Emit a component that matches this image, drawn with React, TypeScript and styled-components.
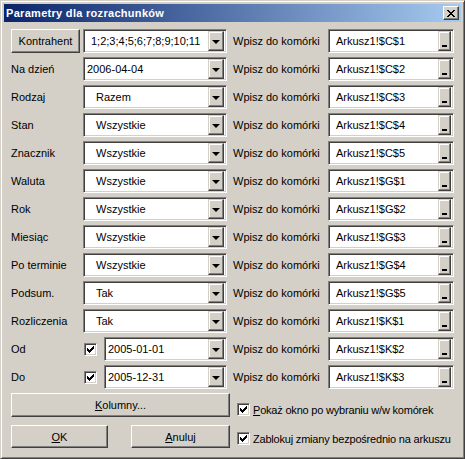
import React from "react";
import styled, { createGlobalStyle, css } from "styled-components";

const GlobalStyle = createGlobalStyle`
  html, body { margin: 0; padding: 0; background: #d4d0c8; }
  body { font-family: "Liberation Sans", Arial, sans-serif; font-size: 11px; color: #000; }
  * { box-sizing: border-box; }
`;

const raisedBtn = css`
  background: #d4d0c8;
  border: 1px solid;
  border-color: #fff #404040 #404040 #fff;
  box-shadow: inset -1px -1px #808080, inset 1px 1px #d4d0c8;
`;

const raisedSmall = css`
  background: #d4d0c8;
  border: 1px solid;
  border-color: #d4d0c8 #404040 #404040 #d4d0c8;
  box-shadow: inset -1px -1px #808080, inset 1px 1px #fff;
`;

const sunken = css`
  background: #fff;
  border: 1px solid;
  border-color: #808080 #fff #fff #808080;
  box-shadow: inset 1px 1px #404040, inset -1px -1px #d4d0c8;
`;

const Window = styled.div`
  width: 465px;
  height: 459px;
  background: #d4d0c8;
  border: 1px solid;
  border-color: #d4d0c8 #404040 #404040 #d4d0c8;
  box-shadow: inset 1px 1px #fff, inset -1px -1px #808080;
  padding: 3px;
  display: flex;
  flex-direction: column;
`;

const TitleBar = styled.div`
  height: 18px;
  flex: none;
  display: flex;
  align-items: center;
  justify-content: space-between;
  padding: 0 2px 0 2px;
  background: linear-gradient(to right, #0a246a, #a6caf0);
`;

const TitleText = styled.span`
  color: #fff;
  font-weight: bold;
  font-size: 11px;
  letter-spacing: 0.3px;
`;

const CloseButton = styled.div`
  ${raisedBtn};
  width: 16px;
  height: 14px;
  display: flex;
  align-items: center;
  justify-content: center;
`;

const Content = styled.div`
  padding: 7px 0 0 7px;
  display: flex;
  flex-direction: column;
  gap: 4px;
`;

const FormGrid = styled.div`
  display: grid;
  grid-template-columns: 72px 144px 101px 126px;
  grid-auto-rows: 24px;
  row-gap: 4px;
`;

const Label = styled.div`
  display: flex;
  align-items: center;
  white-space: nowrap;
`;

const CellLabel = styled(Label)`
  padding-left: 6px;
`;

const PushButton = styled.div<{ $w?: number; $h?: number }>`
  ${raisedBtn};
  width: ${(p) => (p.$w ? `${p.$w}px` : "100%")};
  height: ${(p) => (p.$h ? `${p.$h}px` : "100%")};
  display: flex;
  align-items: center;
  justify-content: center;
  white-space: nowrap;
`;

const Combo = styled.div`
  ${sunken};
  height: 24px;
  flex: 1;
  display: flex;
  align-items: center;
  padding: 2px;
  min-width: 0;
`;

const ComboText = styled.div<{ $indent: number }>`
  flex: 1;
  min-width: 0;
  overflow: hidden;
  white-space: nowrap;
  padding-left: ${(p) => p.$indent}px;
`;

const DropButton = styled.div`
  ${raisedSmall};
  width: 16px;
  height: 20px;
  flex: none;
  display: flex;
  align-items: center;
  justify-content: center;
`;

const RefButton = styled.div`
  ${raisedSmall};
  width: 13px;
  height: 20px;
  flex: none;
  display: flex;
  align-items: flex-end;
  justify-content: center;
  padding-bottom: 3px;
`;

const Dash = styled.div`
  width: 5px;
  height: 2px;
  background: #000;
`;

const Arrow = styled.div`
  width: 0;
  height: 0;
  border-left: 4px solid transparent;
  border-right: 4px solid transparent;
  border-top: 4px solid #000;
  margin-top: 1px;
`;

const CheckCell = styled.div`
  display: flex;
  align-items: center;
  gap: 7px;
  padding-left: 1px;
`;

const Box = styled.div`
  ${sunken};
  width: 13px;
  height: 13px;
  flex: none;
  display: flex;
  align-items: center;
  justify-content: center;
`;

const Bottom = styled.div`
  display: grid;
  grid-template-columns: 219px auto;
  grid-template-rows: 24px 23px;
  row-gap: 8px;
`;

const ButtonPair = styled.div`
  display: flex;
  justify-content: space-between;
`;

const RightChecks = styled.div`
  grid-column: 2;
  grid-row: 1 / span 2;
  display: flex;
  flex-direction: column;
  gap: 16px;
  padding: 10px 0 0 7px;
`;

const CheckRow = styled.div`
  display: flex;
  align-items: center;
  gap: 3px;
  height: 13px;
  white-space: nowrap;
  letter-spacing: -0.2px;
`;

const U = styled.span`
  text-decoration: underline;
`;

const Check = () => (
  <svg width="7" height="7" viewBox="0 0 7 7" shapeRendering="crispEdges">
    <path d="M0 2h1v3h-1z M1 3h1v3h-1z M2 4h1v3h-1z M3 3h1v3h-1z M4 2h1v3h-1z M5 1h1v3h-1z M6 0h1v3h-1z" fill="#000" />
  </svg>
);

const CloseX = () => (
  <svg width="8" height="7" viewBox="0 0 8 7" shapeRendering="crispEdges">
    <path d="M0 0h2v1h-2z M1 1h2v1h-2z M2 2h2v1h-2z M3 3h2v1h-2z M2 4h2v1h-2z M1 5h2v1h-2z M0 6h2v1h-2z M6 0h2v1h-2z M5 1h2v1h-2z M4 2h2v1h-2z M4 4h2v1h-2z M5 5h2v1h-2z M6 6h2v1h-2z" fill="#000" />
  </svg>
);

const ComboBox = ({ text, indent }: { text: string; indent: number }) => (
  <Combo>
    <ComboText $indent={indent}>{text}</ComboText>
    <DropButton>
      <Arrow />
    </DropButton>
  </Combo>
);

const RefEdit = ({ text }: { text: string }) => (
  <Combo>
    <ComboText $indent={5}>{text}</ComboText>
    <RefButton>
      <Dash />
    </RefButton>
  </Combo>
);

type Row = { label: string; value: string; indent: number; cell: string; kind?: "button" | "check" };

const rows: Row[] = [
  { label: "Kontrahent", value: "1;2;3;4;5;6;7;8;9;10;11", indent: 5, cell: "Arkusz1!$C$1", kind: "button" },
  { label: "Na dzień", value: "2006-04-04", indent: 1, cell: "Arkusz1!$C$2" },
  { label: "Rodzaj", value: "Razem", indent: 10, cell: "Arkusz1!$C$3" },
  { label: "Stan", value: "Wszystkie", indent: 10, cell: "Arkusz1!$C$4" },
  { label: "Znacznik", value: "Wszystkie", indent: 10, cell: "Arkusz1!$C$5" },
  { label: "Waluta", value: "Wszystkie", indent: 10, cell: "Arkusz1!$G$1" },
  { label: "Rok", value: "Wszystkie", indent: 10, cell: "Arkusz1!$G$2" },
  { label: "Miesiąc", value: "Wszystkie", indent: 10, cell: "Arkusz1!$G$3" },
  { label: "Po terminie", value: "Wszystkie", indent: 10, cell: "Arkusz1!$G$4" },
  { label: "Podsum.", value: "Tak", indent: 10, cell: "Arkusz1!$G$5" },
  { label: "Rozliczenia", value: "Tak", indent: 10, cell: "Arkusz1!$K$1" },
  { label: "Od", value: "2005-01-01", indent: 1, cell: "Arkusz1!$K$2", kind: "check" },
  { label: "Do", value: "2005-12-31", indent: 1, cell: "Arkusz1!$K$3", kind: "check" },
];

export default function App() {
  return (
    <>
      <GlobalStyle />
      <Window>
        <TitleBar>
          <TitleText>Parametry dla rozrachunków</TitleText>
          <CloseButton>
            <CloseX />
          </CloseButton>
        </TitleBar>
        <Content>
          <FormGrid>
            {rows.map((r) => (
              <React.Fragment key={r.label}>
                {r.kind === "button" ? (
                  <PushButton $w={69}>{r.label}</PushButton>
                ) : (
                  <Label>{r.label}</Label>
                )}
                {r.kind === "check" ? (
                  <CheckCell>
                    <Box>
                      <Check />
                    </Box>
                    <ComboBox text={r.value} indent={r.indent} />
                  </CheckCell>
                ) : (
                  <ComboBox text={r.value} indent={r.indent} />
                )}
                <CellLabel>Wpisz do komórki</CellLabel>
                <RefEdit text={r.cell} />
              </React.Fragment>
            ))}
          </FormGrid>
          <Bottom>
            <PushButton>
              <U>K</U>olumny...
            </PushButton>
            <ButtonPair>
              <PushButton $w={97}>
                <U>O</U>K
              </PushButton>
              <PushButton $w={99}>
                <U>A</U>nuluj
              </PushButton>
            </ButtonPair>
            <RightChecks>
              <CheckRow>
                <Box>
                  <Check />
                </Box>
                <span>
                  <U>P</U>okaż okno po wybraniu w/w komórek
                </span>
              </CheckRow>
              <CheckRow>
                <Box>
                  <Check />
                </Box>
                <span>Zablokuj zmiany bezpośrednio na arkuszu</span>
              </CheckRow>
            </RightChecks>
          </Bottom>
        </Content>
      </Window>
    </>
  );
}
